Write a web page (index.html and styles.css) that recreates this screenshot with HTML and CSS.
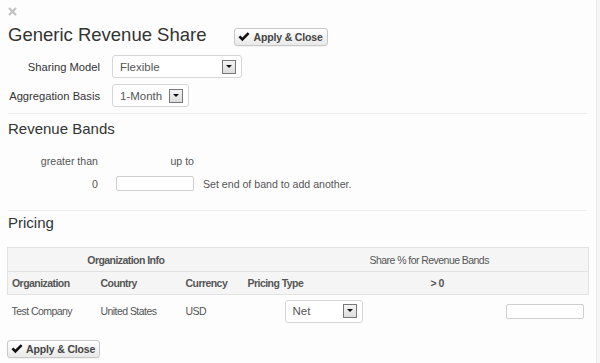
FILE: index.html
```html
<!DOCTYPE html>
<html lang="en">

<head>
    <meta charset="UTF-8">
    <title>Generic Revenue Share</title>
    <link rel="stylesheet" href="styles.css">
</head>

<body>
    <div class="dialog">
        <div class="close">
            <svg width="9" height="9" viewBox="0 0 9 9"><path d="M1 1 L8 8 M8 1 L1 8" stroke="#c2c2c2" stroke-width="2.2"/></svg>
        </div>

        <div class="titlebar">
            <h1>Generic Revenue Share</h1>
            <button class="btn">
                <svg class="check" width="12" height="10" viewBox="0 0 12 10"><path d="M0.5 5.2 L2.3 3.4 L4.4 5.5 L9.7 0.3 L11.5 2.1 L4.4 9.2 Z" fill="#111"/></svg>
                Apply &amp; Close
            </button>
        </div>

        <div class="formrow first">
            <label>Sharing Model</label>
            <div class="select wide"><span>Flexible</span><i class="arrow"></i></div>
        </div>
        <div class="formrow">
            <label>Aggregation Basis</label>
            <div class="select narrow"><span>1-Month</span><i class="arrow"></i></div>
        </div>

        <hr>

        <h2 class="bands-title">Revenue Bands</h2>

        <div class="bands">
            <div class="bands-head">
                <span class="c1">greater than</span>
                <span class="c2">up to</span>
            </div>
            <div class="bands-row">
                <span class="c1">0</span>
                <input class="c2 field" type="text">
                <span class="hint">Set end of band to add another.</span>
            </div>
        </div>

        <hr class="second">

        <h2 class="pricing-title">Pricing</h2>

        <table class="pricing">
            <colgroup>
                <col style="width: 89px">
                <col style="width: 85px">
                <col style="width: 62px">
                <col style="width: 160px">
                <col>
            </colgroup>
            <thead>
                <tr class="group">
                    <th colspan="3" class="center">Organization Info</th>
                    <th colspan="2" class="share">Share % for Revenue Bands</th>
                </tr>
                <tr class="cols">
                    <th>Organization</th>
                    <th>Country</th>
                    <th>Currency</th>
                    <th>Pricing Type</th>
                    <th class="band">&gt; 0</th>
                </tr>
            </thead>
            <tbody>
                <tr>
                    <td>Test Company</td>
                    <td>United States</td>
                    <td>USD</td>
                    <td class="ptype"><div class="select small"><span>Net</span><i class="arrow"></i></div></td>
                    <td class="pct"><input class="field" type="text"></td>
                </tr>
            </tbody>
        </table>

        <button class="btn bottom">
            <svg class="check" width="12" height="10" viewBox="0 0 12 10"><path d="M0.5 5.2 L2.3 3.4 L4.4 5.5 L9.7 0.3 L11.5 2.1 L4.4 9.2 Z" fill="#111"/></svg>
            Apply &amp; Close
        </button>
    </div>
</body>

</html>
```

FILE: styles.css
```css
body {
    margin: 0;
    background-color: #f6f6f6;
    font-family: 'Liberation Sans', Arial, sans-serif;
    color: #333;
}

.dialog {
    box-sizing: border-box;
    width: 597px;
    height: 363px;
    padding: 7px 9px 0 8px;
    background-color: #fdfdfd;
    border-right: 1px solid #e8e8e8;
}

.close {
    height: 9px;
}

.close svg {
    display: block;
}

.titlebar {
    display: flex;
    align-items: flex-start;
    gap: 28px;
    margin-top: 12px;
    height: 18px;
}

h1 {
    margin: -2px 0 0 0;
    font-size: 18.5px;
    line-height: 18px;
    font-weight: normal;
    color: #333;
}

.btn {
    display: inline-flex;
    align-items: center;
    gap: 3px;
    box-sizing: border-box;
    height: 18px;
    padding: 0 4px 0 3px;
    font-family: 'Liberation Sans', Arial, sans-serif;
    font-size: 10.5px;
    font-weight: bold;
    letter-spacing: -0.15px;
    color: #444;
    background: linear-gradient(#ffffff, #e9e9e9);
    border: 1px solid #c8c8c8;
    border-radius: 3px;
    box-shadow: 0 1px 1px rgba(0, 0, 0, 0.05);
}

.check {
    display: block;
}

.formrow {
    display: flex;
    align-items: center;
    gap: 12px;
    height: 23px;
    margin-top: 6px;
}

.formrow.first {
    margin-top: 9px;
}

.formrow label {
    width: 92px;
    text-align: right;
    font-size: 11.2px;
    color: #333;
}

.select {
    box-sizing: border-box;
    display: flex;
    align-items: center;
    justify-content: space-between;
    height: 23px;
    padding: 0 5px 0 7px;
    background-color: #fff;
    border: 1px solid #d6d6d6;
    border-radius: 3px;
    font-family: 'Liberation Sans', Arial, sans-serif;
    font-size: 11.5px;
    letter-spacing: 0;
    color: #555;
}

.select.wide {
    width: 130px;
}

.select.narrow {
    width: 77px;
}

.select.small {
    width: 78px;
    margin-left: 37px;
}

.arrow {
    position: relative;
    box-sizing: border-box;
    width: 14px;
    height: 14px;
    border: 1px solid #777;
    background: linear-gradient(#f4f4f4, #dcdcdc);
}

.arrow::after {
    content: "";
    position: absolute;
    left: 3px;
    top: 4px;
    border-left: 3px solid transparent;
    border-right: 3px solid transparent;
    border-top: 3px solid #111;
}

hr {
    margin: 6px 0 0 0;
    border: none;
    border-top: 1px solid #ececec;
    height: 0;
}

hr.second {
    margin-top: 19px;
}

h2 {
    margin: 0;
    font-size: 15px;
    line-height: 18px;
    font-weight: normal;
    color: #333;
}

.bands-title {
    margin-top: 6px;
}

.pricing-title {
    margin-top: 3px;
}

.bands {
    font-size: 10.6px;
    color: #555;
}

.bands-head,
.bands-row {
    display: flex;
    align-items: center;
}

.bands-head {
    height: 14px;
    margin-top: 16px;
}

.bands-row {
    height: 15px;
    margin-top: 8px;
}

.c1 {
    width: 90px;
    text-align: right;
}

.c2 {
    width: 78px;
    margin-left: 18px;
    text-align: right;
}

.field {
    box-sizing: border-box;
    height: 15px;
    padding: 0;
    background-color: #fff;
    border: 1px solid #cfcfcf;
    border-radius: 2px;
}

.hint {
    margin-left: 9px;
}

.pricing {
    table-layout: fixed;
    border-collapse: collapse;
    width: 582px;
    margin: 15px 0 0 -1px;
    font-size: 10.5px;
    letter-spacing: -0.55px;
    color: #555;
}

.pricing th {
    padding: 0 4px;
    text-align: left;
    background-color: #f5f5f5;
    border-top: 1px solid #e2e2e2;
    white-space: nowrap;
}

.pricing thead tr:first-child th:first-child,
.pricing thead tr:last-child th:first-child {
    border-left: 1px solid #e2e2e2;
}

.pricing thead th:last-child {
    border-right: 1px solid #e2e2e2;
}

.pricing tr.group th {
    height: 23px;
}

.pricing tr.cols th {
    height: 22px;
    border-bottom: 1px solid #e2e2e2;
}

.pricing th.center {
    text-align: center;
}

.pricing th.share {
    padding-left: 126px;
    font-weight: normal;
}

.pricing th.band {
    padding-left: 27px;
}

.pricing td {
    height: 32px;
    padding: 0 4px;
    white-space: nowrap;
}

.pricing td.pct {
    text-align: right;
    padding-right: 5px;
}

.pricing td.pct .field {
    width: 78px;
    vertical-align: middle;
}

.btn.bottom {
    margin: 13px 0 0 -1px;
}
```
